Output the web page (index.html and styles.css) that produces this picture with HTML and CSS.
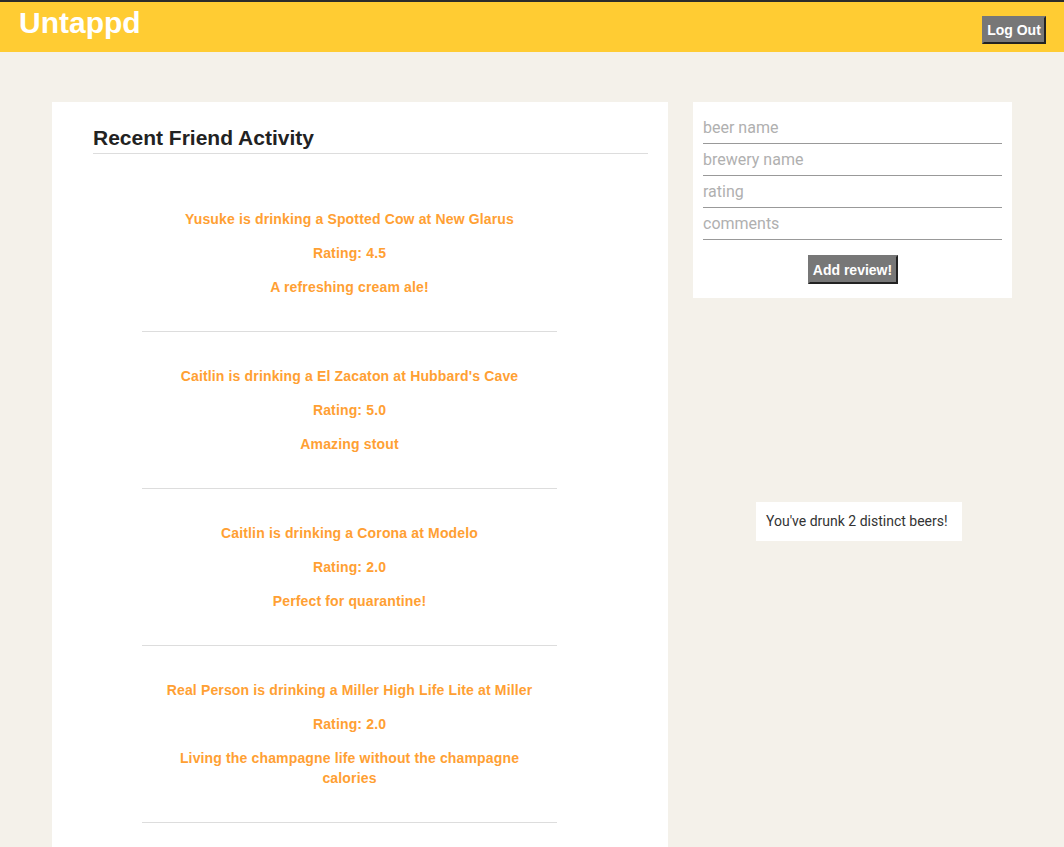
FILE: index.html
```html
<!DOCTYPE html>
<html>
<head>
<meta charset="utf-8">
<title>Untappd</title>
<link rel="stylesheet" href="styles.css">
</head>
<body>
<header class="topbar">
  <h1 class="brand">Untappd</h1>
  <button class="btn logout">Log Out</button>
</header>
<main class="layout">
  <section class="card feed">
    <h2 class="feed-title">Recent Friend Activity</h2>
    <div class="feed-list">
      <article class="item">
        <p>Yusuke is drinking a Spotted Cow at New Glarus</p>
        <p>Rating: 4.5</p>
        <p>A refreshing cream ale!</p>
      </article>
      <article class="item">
        <p>Caitlin is drinking a El Zacaton at Hubbard's Cave</p>
        <p>Rating: 5.0</p>
        <p>Amazing stout</p>
      </article>
      <article class="item">
        <p>Caitlin is drinking a Corona at Modelo</p>
        <p>Rating: 2.0</p>
        <p>Perfect for quarantine!</p>
      </article>
      <article class="item">
        <p>Real Person is drinking a Miller High Life Lite at Miller</p>
        <p>Rating: 2.0</p>
        <p>Living the champagne life without the champagne calories</p>
      </article>
    </div>
  </section>
  <aside class="side">
    <form class="card review">
      <input class="field" type="text" placeholder="beer name">
      <input class="field" type="text" placeholder="brewery name">
      <input class="field" type="text" placeholder="rating">
      <input class="field" type="text" placeholder="comments">
      <div class="actions"><button type="button" class="btn add">Add review!</button></div>
    </form>
    <div class="stats">You've drunk 2 distinct beers!</div>
  </aside>
</main>
</body>
</html>
```

FILE: styles.css
```css
html, body {
  margin: 0;
  padding: 0;
}
body {
  background: #f4f1ea;
  font-family: "Liberation Sans", Arial, sans-serif;
  min-height: 847px;
}
.topbar {
  background: #ffcc33;
  border-top: 2px solid #2b2b2b;
  height: 50px;
  display: flex;
  align-items: flex-start;
  justify-content: space-between;
  padding: 0 18px 0 19px;
}
.brand {
  margin: 0;
  color: #fff;
  font-size: 30px;
  font-weight: bold;
  line-height: 41px;
}
.btn {
  background: #777;
  color: #fff;
  font-family: "Liberation Sans", Arial, sans-serif;
  font-weight: bold;
  font-size: 14px;
  border: 2px solid;
  border-color: #777 #222 #222 #777;
  padding: 0;
  cursor: pointer;
}
.logout {
  margin-top: 14px;
  width: 64px;
  height: 28px;
}
.layout {
  display: grid;
  grid-template-columns: 616px 319px;
  column-gap: 25px;
  padding: 50px 52px 0;
  align-items: start;
}
.card {
  background: #fff;
}
.feed {
  padding: 24px 20px 0 41px;
  min-height: 760px;
}
.feed-title {
  margin: 0;
  font-size: 21px;
  line-height: 24px;
  color: #222;
  padding-bottom: 3px;
  border-bottom: 1px solid #ddd;
}
.feed-list {
  margin: 21px 0 0 49px;
  width: 415px;
}
.item {
  padding: 20px 22px;
  border-bottom: 1px solid #ddd;
  text-align: center;
}
.item p {
  margin: 14px 0;
  color: #ffa033;
  font-weight: bold;
  font-size: 14px;
  line-height: 20px;
  letter-spacing: 0.15px;
}
.review {
  padding: 10px 10px 14px;
  display: flex;
  flex-direction: column;
}
.field {
  border: 0;
  border-bottom: 1px solid #999;
  height: 31px;
  padding: 0;
  font-family: Roboto, "Liberation Sans", sans-serif;
  font-size: 16px;
  color: #333;
  outline: none;
  background: transparent;
}
.field::placeholder {
  color: #b0b0b0;
}
.actions {
  display: flex;
  justify-content: center;
  margin-top: 15px;
}
.add {
  width: 90px;
  height: 29px;
}
.stats {
  margin: 204px 0 0 63px;
  width: 186px;
  background: #fff;
  padding: 10px;
  font-family: Roboto, "Liberation Sans", sans-serif;
  font-size: 14px;
  line-height: 19px;
  color: #333;
  white-space: nowrap;
}
```
